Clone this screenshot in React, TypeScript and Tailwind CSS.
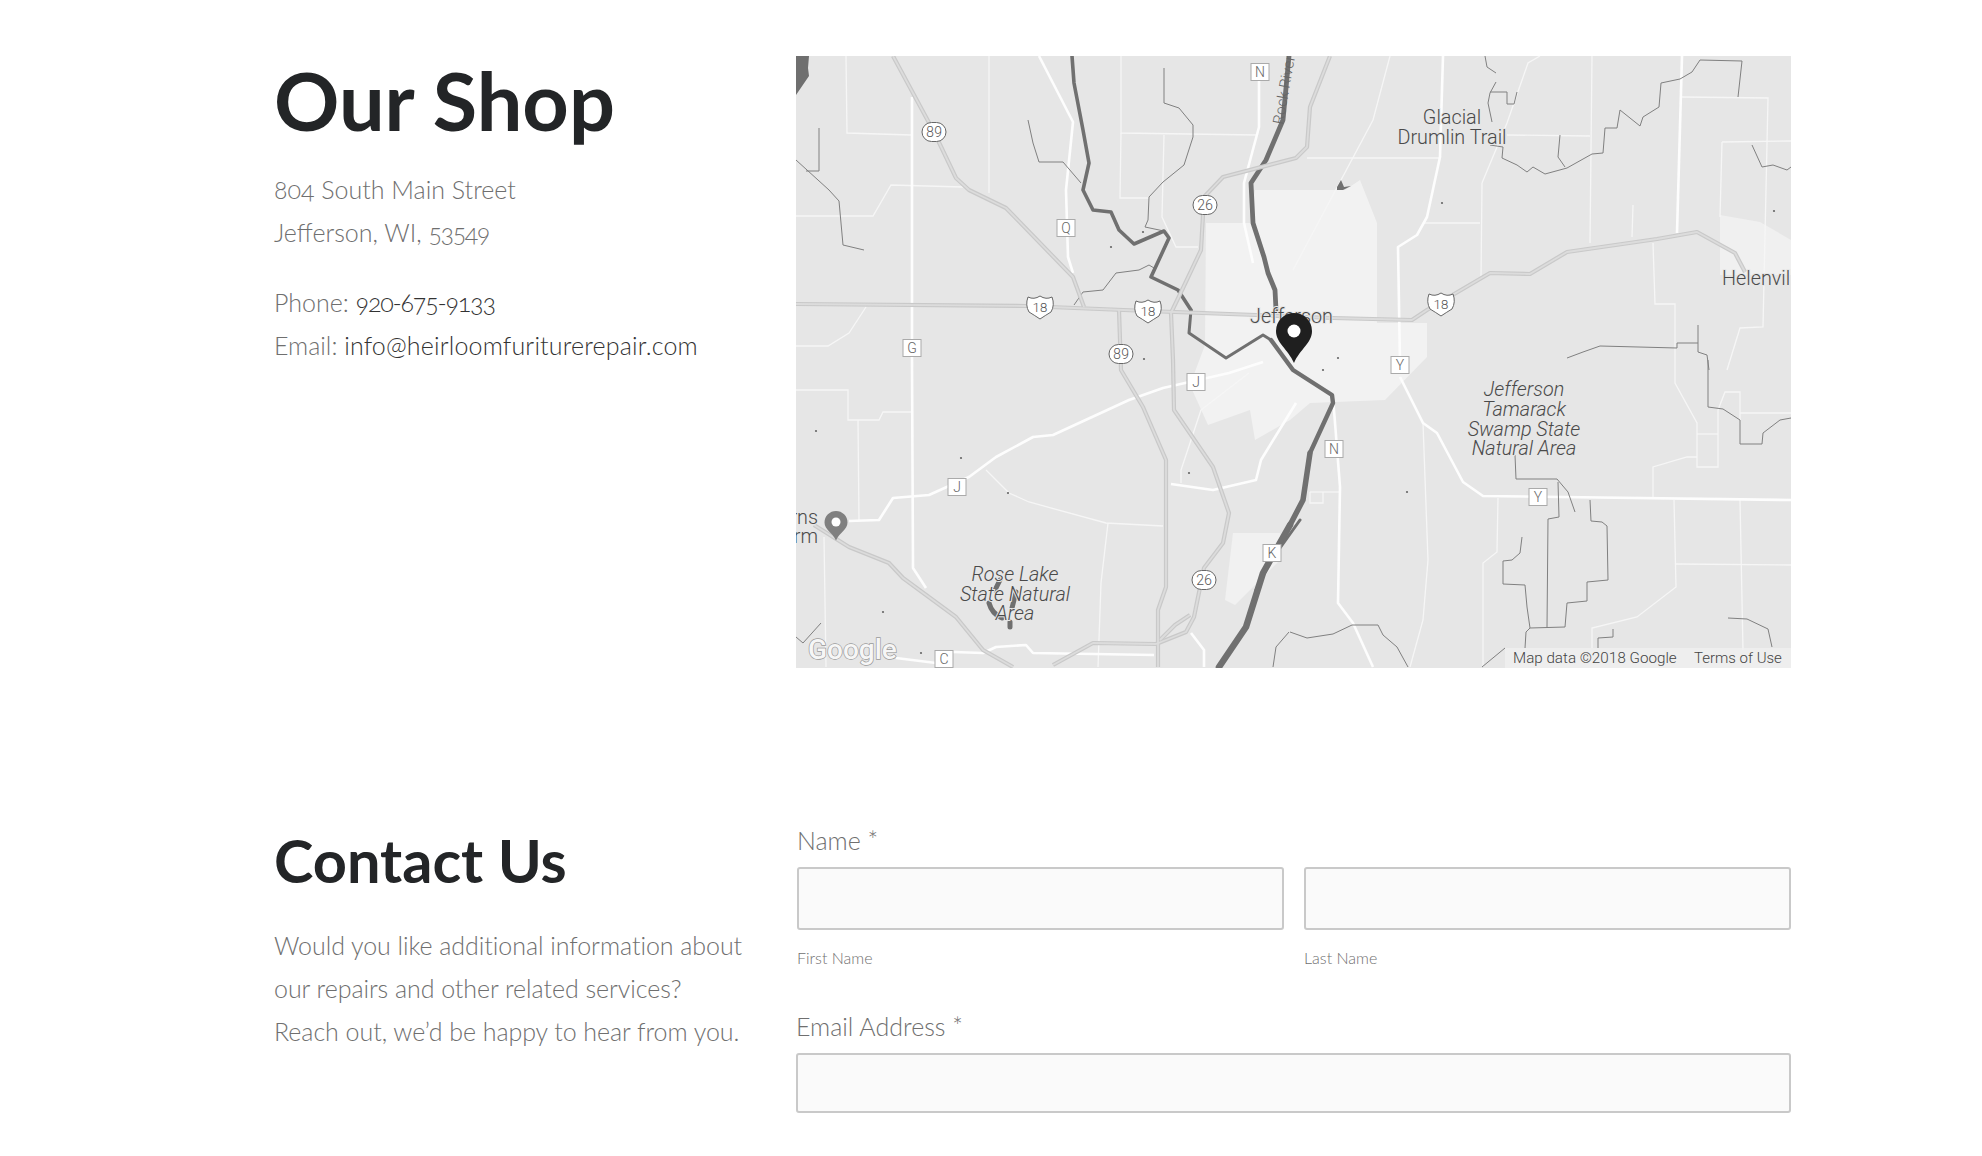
const highways = [
  "893,56 934,132 956,178 969,190 1006,208 1073,277 1084,307",
  "796,304 1026,306 1148,311 1256,315 1333,318 1412,320 1427,310 1490,273 1530,274 1567,252 1657,239 1697,232 1735,253 1745,272",
  "1330,56 1310,107 1307,147 1296,158 1223,177 1204,197 1201,250 1183,288 1171,313 1173,360 1174,410 1213,467 1229,513 1223,543 1204,568 1194,617 1186,632 1156,644 1093,643 1053,665",
  "1119,310 1121,370 1143,407 1166,460 1166,587 1158,610 1158,667",
  "814,525 849,547 889,563 903,578 956,617 983,650 1013,667",
  "1190,615 1175,625 1160,640",
];

const mainRoads = [
  "912,97 912,360 913,568 926,588",
  "1039,56 1073,122 1066,190 1068,257 1073,273",
  "849,521 879,520 893,498 929,495 969,477 996,457 1033,437 1053,435 1129,400 1163,388 1229,373 1263,362",
  "1400,377 1423,423 1437,433 1463,482 1483,496 1791,500",
  "1400,363 1398,247 1417,235 1427,217 1440,157 1443,56",
  "1333,397 1340,487 1338,603 1353,623 1373,667",
  "1259,80 1259,127 1244,183 1244,223 1253,263",
  "1682,56 1677,233",
  "896,658 936,663",
  "953,652 983,653 996,647 1026,645 1033,653 1154,655",
  "1171,484 1213,490 1256,480 1261,460 1296,403",
  "1191,633 1204,650 1204,667",
];

const minorRoads = [
  "846,56 847,133 911,135", "989,56 989,193", "1121,56 1121,133 1256,135", "1121,133 1120,198 1149,198",
  "1164,135 1162,217 1176,247 1198,247", "796,216 873,216 891,185 963,187", "866,307 849,333 828,346 796,346",
  "1592,56 1590,243", "1682,97 1768,98 1763,327 1740,328 1727,370", "1722,142 1791,141", "1722,142 1720,217",
  "1653,243 1655,304 1675,304 1675,383 1697,423 1697,467 1718,467 1718,410 1725,392 1740,392 1740,420",
  "1482,183 1481,280", "1423,223 1480,223", "1482,183 1507,123 1528,63 1540,56", "1307,158 1440,158",
  "1507,135 1590,136", "1633,205 1632,237", "1697,434 1718,434", "1740,413 1791,413",
  "1653,497 1653,467 1687,457 1697,457", "1498,498 1497,552 1483,563 1483,667",
  "1674,500 1676,587 1637,617 1592,628 1592,648", "1676,564 1791,565", "1740,500 1743,650",
  "1423,423 1428,560 1423,620 1410,667", "1310,492 1340,492", "1310,492 1310,503 1323,503 1323,492",
  "796,390 848,390 848,420 879,420 883,412 911,412", "858,420 859,520", "824,537 826,667",
  "986,470 1009,493 1029,502 1106,523 1163,526", "1108,523 1101,583 1098,667", "1181,483 1181,470 1201,410 1249,373",
  "1390,56 1373,120 1293,270",
];

const creeks = [
  "1164,68 1164,103 1179,108 1193,125 1193,137 1184,165 1163,182 1149,197 1148,220 1145,227 1164,231",
  "1028,120 1033,143 1039,162 1063,162 1081,183",
  "819,128 819,171 806,171", "796,160 829,190 839,201 843,245 864,250",
  "1074,305 1083,292 1103,290 1116,273 1139,270 1149,265 1154,268",
  "1485,56 1487,67 1496,73", "1496,82 1490,93 1488,103 1492,122", "1490,92 1507,92 1507,104 1514,104 1517,92",
  "1490,145 1503,147 1502,158 1517,165 1527,172 1533,167 1545,174 1567,168 1592,154 1603,153 1605,128 1617,128 1620,110 1640,126 1643,117 1659,107 1661,83 1680,79 1692,72 1700,60 1742,61 1738,97",
  "1560,135 1558,157 1565,167", "1752,145 1762,167 1773,165 1787,170 1791,167",
  "1567,358 1583,352 1600,346 1677,348 1677,343 1698,343 1698,325", "1698,343 1698,352 1707,355 1709,370",
  "1708,360 1708,407 1723,409 1740,420 1740,444 1762,444 1763,433 1780,420 1791,418",
  "1515,455 1516,479 1557,479 1568,492 1575,512", "1558,482 1559,517 1548,519 1547,627",
  "1522,537 1520,553 1512,560 1503,561 1503,584 1525,585 1527,607 1530,628 1565,627 1567,603 1587,601 1587,582 1608,580 1607,526 1602,522 1591,521 1590,500",
  "1530,628 1526,632 1525,648", "1290,632 1307,638 1333,634 1352,625 1378,625 1383,635 1397,647 1408,667",
  "1728,618 1747,619 1768,629 1772,647", "1598,648 1598,638 1613,637 1613,629", "1482,667 1505,648",
  "1273,667 1276,647 1289,632", "796,637 803,643 821,623",
];

// river segments get wider going south
const rivers = [
  { points: "1072,56 1074,83 1083,130 1089,163 1083,190 1093,210 1111,212 1119,230 1134,244 1164,231 1169,238 1151,277 1178,290 1191,310", width: 3.6 },
  { points: "1191,310 1189,333 1226,358 1263,335 1271,340", width: 3 },
  { points: "1271,340 1293,370 1332,395 1333,403 1310,453", width: 4.4 },
  { points: "1310,453 1303,500 1290,525", width: 5.5 },
  { points: "1290,525 1263,573 1246,627 1219,667", width: 6.5 },
  { points: "1300,520 1270,562 1256,590", width: 3 },
  { points: "1289,56 1283,120 1266,160 1251,183 1253,223 1264,257 1268,273 1275,290 1276,310", width: 4.8 },
];

const specks = [
  [1144, 359], [1111, 247], [1442, 203], [1774, 211], [816, 431], [883, 612], [1008, 493],
  [961, 458], [1189, 473], [1338, 358], [1323, 370], [1143, 232], [1407, 492], [921, 653],
];

const routeBadges = [
  { x: 934, y: 132, label: "89" }, { x: 1205, y: 205, label: "26" },
  { x: 1121, y: 354, label: "89" }, { x: 1204, y: 580, label: "26" },
];
const usShields = [{ x: 1040, y: 307 }, { x: 1148, y: 311 }, { x: 1441, y: 304 }];
const countyBadges = [
  { x: 1260, y: 72, label: "N" }, { x: 1066, y: 228, label: "Q" }, { x: 912, y: 348, label: "G" },
  { x: 1196, y: 382, label: "J" }, { x: 957, y: 487, label: "J" }, { x: 1400, y: 365, label: "Y" },
  { x: 1334, y: 449, label: "N" }, { x: 1538, y: 497, label: "Y" }, { x: 1272, y: 553, label: "K" },
  { x: 944, y: 659, label: "C" },
];

function ShopMap() {
  return (
    <svg viewBox="796 56 995 612" className="block w-full h-full bg-[#e6e6e6] font-['Roboto',sans-serif] lining-nums">
      {/* city + lighter zones */}
      <polygon points="1206,223 1250,223 1255,190 1345,190 1360,180 1377,223 1377,323 1427,323 1427,357 1385,400 1310,403 1290,420 1255,440 1250,410 1208,425 1190,385 1205,345" fill="#f2f2f2" />
      <polygon points="1233,533 1280,533 1280,560 1250,590 1235,605 1225,600" fill="#f1f1f1" />
      <polygon points="1720,215 1760,222 1791,240 1791,275 1720,275" fill="#f0f0f0" />

      {minorRoads.map((p) => <polyline key={p} points={p} fill="none" stroke="#f6f6f6" strokeWidth="1.3" />)}
      {mainRoads.map((p) => <polyline key={p} points={p} fill="none" stroke="#fdfdfd" strokeWidth="2.6" strokeLinejoin="round" />)}
      {creeks.map((p) => <polyline key={p} points={p} fill="none" stroke="#808080" strokeWidth="1" />)}

      {/* rivers */}
      {rivers.map((r) => (
        <polyline key={r.points} points={r.points} fill="none" stroke="#707070" strokeWidth={r.width} strokeLinejoin="round" strokeLinecap="round" />
      ))}
      <path d="M796,56 L809,56 L808,68 L809,76 L796,95 Z" fill="#6f6f6f" />
      <path d="M1000,580 L995,590 M1016,592 L1012,608 M989,603 Q992,614 1002,618 M1010,622 L1010,627" fill="none" stroke="#6f6f6f" strokeWidth="5" strokeLinecap="round" />
      <path d="M1337,187 L1341,180 L1344,187 L1351,186 L1343,190 L1337,190 Z" fill="#707070" />
      {specks.map(([x, y]) => <circle key={`${x}-${y}`} cx={x} cy={y} r="1.1" fill="#666" />)}

      {highways.map((p) => <polyline key={p} points={p} fill="none" stroke="#c9c9c9" strokeWidth="4.2" strokeLinejoin="round" />)}
      {highways.map((p) => <polyline key={p} points={p} fill="none" stroke="#dcdcdc" strokeWidth="1.8" strokeLinejoin="round" />)}

      {routeBadges.map((b) => (
        <g key={`${b.x}-${b.y}`}>
          <rect x={b.x - 12} y={b.y - 9.5} width="24" height="19" rx="9.5" fill="#fff" stroke="#666" strokeWidth="1" />
          <text x={b.x} y={b.y + 5} textAnchor="middle" fontSize="14" fill="#555">{b.label}</text>
        </g>
      ))}
      {usShields.map((b) => (
        <g key={b.x}>
          <path d={`M${b.x - 12},${b.y - 10} q6,3 12,-1 q6,4 12,1 q3,8 -1,15 q-5,3 -11,7 q-6,-4 -11,-7 q-4,-7 -1,-15 z`} fill="#fff" stroke="#666" strokeWidth="1" />
          <text x={b.x} y={b.y + 5} textAnchor="middle" fontSize="13.5" fill="#555">18</text>
        </g>
      ))}
      {countyBadges.map((b) => (
        <g key={`${b.x}-${b.y}`}>
          <rect x={b.x - 9} y={b.y - 8.5} width="18" height="17" fill="#fff" stroke="#aaa" strokeWidth="1" />
          <text x={b.x} y={b.y + 5} textAnchor="middle" fontSize="14" fill="#666">{b.label}</text>
        </g>
      ))}

      <g fontSize="19.8" fill="#4a4a4a" stroke="#e6e6e6" strokeWidth="2" paintOrder="stroke">
        <text x="1452" y="124" textAnchor="middle">Glacial</text>
        <text x="1452" y="144" textAnchor="middle">Drumlin Trail</text>
        <text x="1722" y="285">Helenville</text>
        <text x="1250" y="323">Jefferson</text>
        <text x="818" y="524" textAnchor="end">Burns</text>
        <text x="818" y="543" textAnchor="end">Farm</text>
        <g fontStyle="italic">
          <text x="1524" y="396" textAnchor="middle">Jefferson</text>
          <text x="1524" y="416" textAnchor="middle">Tamarack</text>
          <text x="1524" y="436" textAnchor="middle">Swamp State</text>
          <text x="1524" y="455" textAnchor="middle">Natural Area</text>
          <text x="1015" y="581" textAnchor="middle">Rose Lake</text>
          <text x="1015" y="601" textAnchor="middle">State Natural</text>
          <text x="1015" y="620" textAnchor="middle">Area</text>
        </g>
      </g>
      <text x="1283" y="125" fontSize="15" fill="#666" transform="rotate(-80 1283 125)">Rock River</text>

      {/* pins */}
      <path d="M836,511 a11.5,11.5 0 0 1 11.5,11.5 c0,7 -8,10 -11.5,18 c-3.5,-8 -11.5,-11 -11.5,-18 a11.5,11.5 0 0 1 11.5,-11.5 z" fill="#808080" />
      <circle cx="836" cy="522" r="4.5" fill="#fff" />
      <path d="M1294,313 a18,18 0 0 1 18,18 c0,12 -12,18 -18,32 c-6,-14 -18,-20 -18,-32 a18,18 0 0 1 18,-18 z" fill="#1f1f1f" />
      <circle cx="1294" cy="331" r="6.5" fill="#fff" />

      <text x="808" y="659" fontSize="28" fontWeight="500" fill="#f6f6f6" stroke="#9a9a9a" strokeWidth="1.4" paintOrder="stroke">Google</text>

      <rect x="1505" y="648" width="286" height="20" fill="#f0f0f0" fillOpacity="0.75" />
      <text x="1513" y="663" fontSize="15.2" fill="#444">Map data ©2018 Google</text>
      <text x="1694" y="663" fontSize="15" fill="#444">Terms of Use</text>
    </svg>
  );
}

function Field({ className = "" }: { className?: string }) {
  return <div className={`border-2 border-[#c9c9c9] rounded-[3px] bg-[#fafafa] ${className}`} />;
}

export default function App() {
  return (
    <div className="w-[1982px] h-[1156px] overflow-hidden bg-white pl-[274px] pt-[56px] font-['Lato',sans-serif] font-light text-[#6f6f6f] oldstyle-nums">
      {/* OUR SHOP */}
      <section className="grid grid-cols-[522px_995px]">
        <div>
          <h1 className="mt-[-2px] text-[81px] leading-[92px] font-bold text-[#232527]">Our Shop</h1>
          <div className="mt-[22px] text-[25px] leading-[43px]">
            <p>804 South Main Street</p>
            <p>Jefferson, WI, <span className="tracking-[-1.4px]">53549</span></p>
          </div>
          <div className="mt-[27px] text-[25px] leading-[43px]">
            <p>Phone: <span className="text-[#333] tracking-[-1.2px]">920-675-9133</span></p>
            <p>Email: <span className="text-[#333] tracking-[0.17px]">info@heirloomfuriturerepair.com</span></p>
          </div>
        </div>
        <div className="h-[612px]">
          <ShopMap />
        </div>
      </section>

      {/* CONTACT */}
      <section className="grid grid-cols-[522px_995px] mt-[153px]">
        <div>
          <h2 className="mt-[3px] text-[59.5px] leading-[72px] font-bold text-[#232527]">Contact Us</h2>
          <p className="mt-[28px] text-[25px] leading-[43px] tracking-[-0.05px]">
            Would you like additional information about<br />
            our repairs and other related services?<br />
            Reach out, we’d be happy to hear from you.
          </p>
        </div>
        <div>
          <div className="mt-[4px] text-[25px] leading-[30px] pl-[1px]">Name *</div>
          <div className="grid grid-cols-2 gap-[20px] mt-[12px] pl-[1px]">
            <div>
              <Field className="h-[63px]" />
              <div className="mt-[17px] text-[16px] leading-[22px]">First Name</div>
            </div>
            <div>
              <Field className="h-[63px]" />
              <div className="mt-[17px] text-[16px] leading-[22px]">Last Name</div>
            </div>
          </div>
          <div className="mt-[42px] text-[25px] leading-[30px]">Email Address *</div>
          <Field className="h-[60px] mt-[12px]" />
        </div>
      </section>
    </div>
  );
}
